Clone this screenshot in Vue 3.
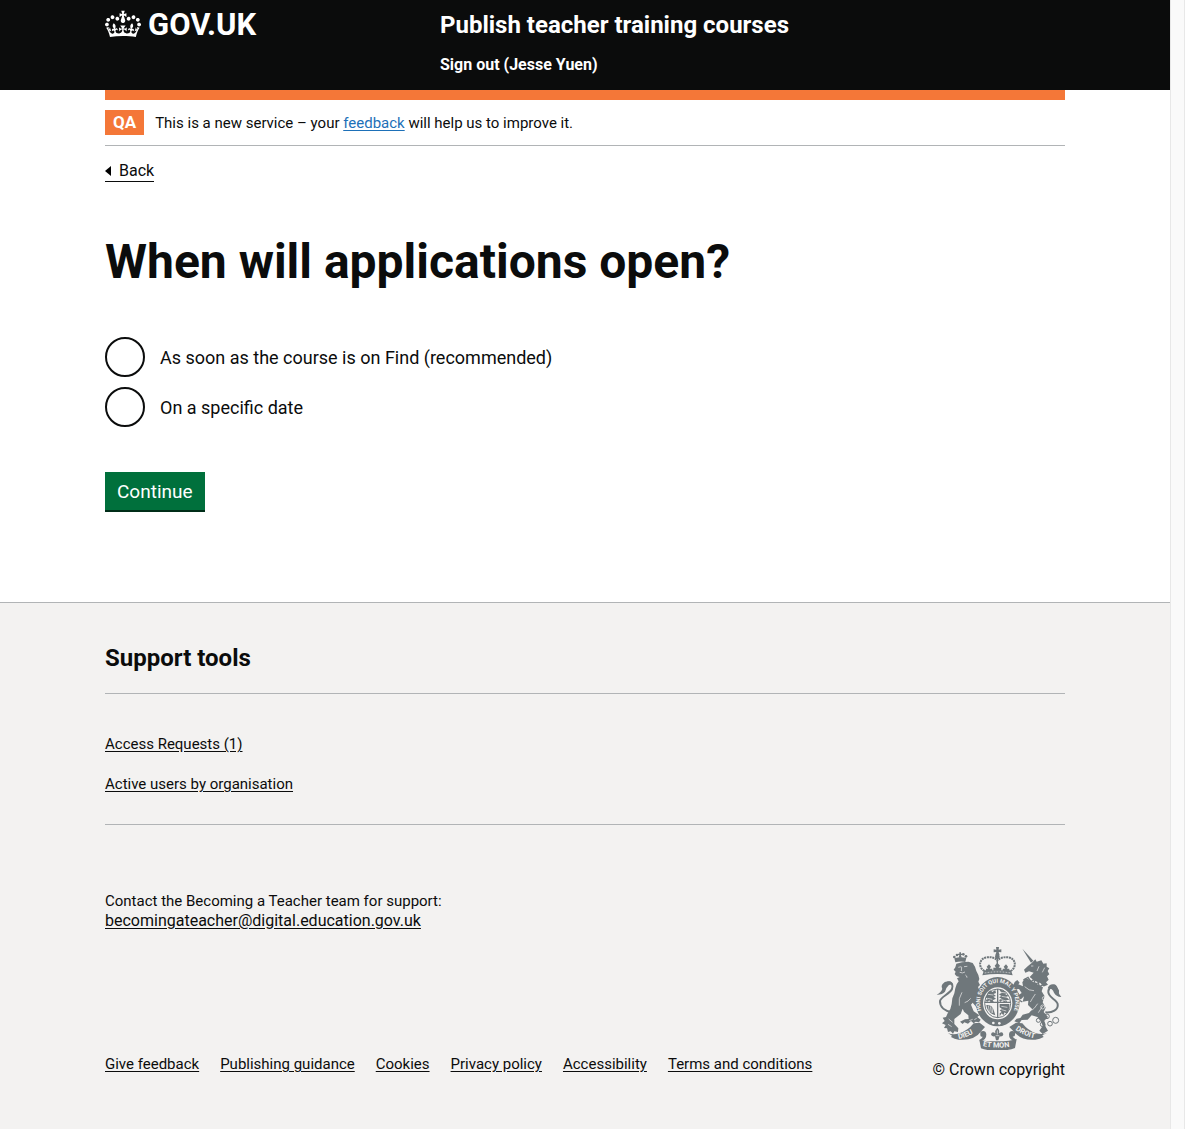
<script setup>
import { ref } from 'vue'

const opening = ref('')
const options = [
  { value: 'course-on-find', label: 'As soon as the course is on Find (recommended)' },
  { value: 'specific-date', label: 'On a specific date' },
]
const supportLinks = ['Access Requests (1)', 'Active users by organisation']
const footerLinks = [
  'Give feedback',
  'Publishing guidance',
  'Cookies',
  'Privacy policy',
  'Accessibility',
  'Terms and conditions',
]
</script>

<template>
  <div class="window">
    <div class="page">
      <header class="header">
        <div class="container header-grid">
          <a class="logo" href="#" aria-label="GOV.UK">
            <svg class="crown" viewBox="0 0 132 97" aria-hidden="true">
              <path
                fill="currentColor"
                fill-rule="evenodd"
                d="M25 30.2c3.5 1.5 7.7-.2 9.1-3.7 1.5-3.6-.2-7.8-3.9-9.2-3.6-1.4-7.6.3-9.1 3.9-1.4 3.5.3 7.5 3.9 9zM9 39.5c3.6 1.5 7.8-.2 9.2-3.7 1.5-3.6-.2-7.8-3.9-9.1-3.6-1.5-7.6.2-9.1 3.8-1.4 3.5.3 7.5 3.8 9zM4.4 57.2c3.5 1.5 7.7-.2 9.1-3.8 1.5-3.6-.2-7.7-3.9-9.1-3.5-1.5-7.6.3-9.1 3.8-1.4 3.5.3 7.6 3.9 9.1zm38.3-21.4c3.5 1.5 7.7-.2 9.1-3.8 1.5-3.6-.2-7.7-3.9-9.1-3.6-1.5-7.6.3-9.1 3.8-1.3 3.6.4 7.7 3.9 9.1zm64.4-5.6c-3.6 1.5-7.8-.2-9.1-3.7-1.5-3.6.2-7.8 3.8-9.2 3.6-1.4 7.7.3 9.2 3.9 1.3 3.5-.4 7.5-3.9 9zm15.9 9.3c-3.6 1.5-7.7-.2-9.1-3.7-1.5-3.6.2-7.8 3.7-9.1 3.6-1.5 7.7.2 9.2 3.8 1.5 3.5-.3 7.5-3.8 9zm4.7 17.7c-3.6 1.5-7.8-.2-9.2-3.8-1.5-3.6.2-7.7 3.9-9.1 3.6-1.5 7.7.3 9.2 3.8 1.3 3.5-.4 7.6-3.9 9.1zM89.3 35.8c-3.6 1.5-7.8-.2-9.2-3.8-1.4-3.6.2-7.7 3.9-9.1 3.6-1.5 7.7.3 9.2 3.8 1.4 3.6-.3 7.7-3.9 9.1zM69.7 17.7l8.9 4.7V9.3l-8.9 2.8c-.2-.3-.5-.6-.9-.9L72.4 0H59.6l3.5 11.2c-.3.3-.6.5-.9.9l-8.8-2.8v13.1l8.8-4.7c.3.3.6.7.9.9l-5 15.4v.1c-.2.8-.4 1.6-.4 2.4 0 4.1 3.1 7.5 7 8.1h.2c.3 0 .7.1 1 .1.4 0 .7 0 1-.1h.2c4-.6 7.1-4.1 7.1-8.1 0-.8-.1-1.7-.4-2.4V34l-5.1-15.4c.4-.2.7-.6 1-.9zM66 92.8c16.9 0 32.8 1.1 47.1 3.2 4-16.9 8.9-26.7 14-33.5l-9.6-3.4c1 4.9 1.1 7.2 0 10.2-1.5-1.4-3-4.3-4.2-8.7L108.6 76c2.8-2 5-3.2 7.5-3.3-4.4 9.4-10 11.9-13.6 11.2-4.3-.8-6.3-4.6-5.6-7.9 1-4.7 5.7-5.9 8-.5 4.3-8.7-3-11.4-7.6-8.8 7.1-7.2 7.9-13.5 2.1-21.1-8 6.1-8.1 12.3-4.5 20.8-4.7-5.4-12.1-2.5-9.5 6.2 3.4-5.2 7.9-2 7.2 3.1-.6 4.3-6.4 7.8-13.5 7.2-10.3-.9-10.9-8-11.2-13.8 2.5-.5 7.1 1.8 11 7.3L80.2 60c-4.1 4.4-8 5.3-12.3 5.4 1.4-4.4 8-11.6 8-11.6H55.5s6.4 7.2 7.9 11.6c-4.2-.1-8-1-12.3-5.4l1.4 16.4c3.9-5.5 8.5-7.7 10.9-7.3-.3 5.8-.9 12.8-11.1 13.8-7.2.6-12.9-2.9-13.5-7.2-.7-5 3.8-8.3 7.1-3.1 2.7-8.7-4.6-11.6-9.4-6.2 3.7-8.5 3.6-14.7-4.6-20.8-5.8 7.6-5 13.9 2.2 21.1-4.7-2.6-11.9.1-7.7 8.8 2.3-5.5 7.1-4.2 8.1.5.7 3.3-1.3 7.1-5.7 7.9-3.5.7-9-1.8-13.5-11.2 2.5.1 4.7 1.3 7.5 3.3l-4.7-15.4c-1.2 4.4-2.7 7.2-4.3 8.7-1.1-3-.9-5.3 0-10.2l-9.5 3.4c5 6.9 9.9 16.7 14 33.5 14.8-2.1 30.8-3.2 47.7-3.2z"
              />
            </svg>
            <span class="logo-text">GOV.UK</span>
          </a>
          <div>
            <a class="service-name" href="#">Publish teacher training courses</a>
            <a class="sign-out" href="#">Sign out (Jesse Yuen)</a>
          </div>
        </div>
      </header>

      <div class="container">
        <div class="environment-bar"></div>
        <div class="phase-banner">
          <strong class="tag">QA</strong>
          <span>This is a new service – your <a href="#">feedback</a> will help us to improve it.</span>
        </div>

        <a class="back-link" href="#">
          <svg class="back-arrow" viewBox="0 0 6 10" aria-hidden="true"><path d="M0 5 6 0v10z" /></svg>
          Back
        </a>

        <main>
          <form @submit.prevent>
            <fieldset>
              <legend><h1>When will applications open?</h1></legend>
              <div v-for="o in options" :key="o.value" class="radio-row">
                <input :id="o.value" v-model="opening" type="radio" name="opening" :value="o.value" />
                <label :for="o.value">{{ o.label }}</label>
              </div>
            </fieldset>
            <button class="continue" type="submit">Continue</button>
          </form>
        </main>
      </div>

      <footer class="footer">
        <div class="container">
          <h2>Support tools</h2>
          <ul class="support-links">
            <li v-for="l in supportLinks" :key="l"><a href="#">{{ l }}</a></li>
          </ul>
          <p class="contact">
            Contact the Becoming a Teacher team for support:<br />
            <a class="email" href="#">becomingateacher@digital.education.gov.uk</a>
          </p>
          <div class="meta">
            <ul class="meta-links">
              <li v-for="l in footerLinks" :key="l"><a href="#">{{ l }}</a></li>
            </ul>
            <a class="copyright" href="#">
              <svg class="arms" viewBox="47 33 384 312" aria-hidden="true">
                <defs>
                  <path id="garter" d="M197 245A53 60 0 1 1 273 245" />
                  <path id="scroll-left" d="M118 312Q147 307 178 285" />
                  <path id="scroll-mid" d="M190 333Q235 343 284 333" />
                  <path id="scroll-right" d="M288 284Q318 306 354 312" />
                </defs>

                <!-- lion -->
                <g class="ink">
                  <path d="M108 82 105 70q17-6 36-2l-3 13q-14-4-30 1z" />
                  <circle cx="105" cy="66" r="4" />
                  <circle cx="113" cy="60" r="4" />
                  <circle cx="132" cy="58" r="4" />
                  <circle cx="140" cy="64" r="4" />
                  <path d="M120 52h5v4h4v4h-4l2 8h-9l2-8h-4v-4h4z" />
                  <path d="M111 86 128 82 147 80 160 84 167 95 171 108 177 120 180 132 177 140 182 150 176 156 181 167 174 174 179 184 173 197 182 207 193 208 188 216 192 224 182 224 170 215 160 203 155 209 163 229 180 241 174 246 184 254 179 262 169 260 163 265 155 258 146 266 135 262 130 267 122 260 137 253 148 252 147 241 134 230 130 221 124 237 105 252 105 267 117 280 116 291 105 289 101 296 94 289 86 291 83 280 74 279 79 270 68 265 76 258 70 248 80 246 85 235 93 222 97 207 99 190 105 175 108 160 112 148 118 139 113 130 121 126 112 124 106 117 109 110 103 104 108 97z" />
                </g>
                <g class="paper-line">
                  <path d="M117 97l9-2m8 0 10-1M127 96l-1 12M121 112q9 4 16-1M138 120q5 2 5 8" />
                  <path d="M128 172q-12 18-8 40M154 190q-7 10-18 13" />
                  <path d="M88 252l12 10M86 268l11 7M150 257l10-4M165 254l7-4" />
                </g>
                <g class="ink-line">
                  <path d="M98 232C77 228 61 216 62 198c1-12 29-21 36-36 5-11-2-20-12-20-13 0-19 12-14 18" stroke-width="6" />
                </g>
                <path class="ink" d="M52 179q14-7 17-18 2-14 15-21 14-4 18 10-9-3-14 1-8 7-11 19-9 10-25 9z" />

                <!-- unicorn -->
                <g class="ink">
                  <path d="M309 41 342 77 335 83z" />
                  <path d="M337 84 348 73 352 80 366 76 372 86 382 85 382 95 390 100 385 108 390 118 383 124 388 134 380 142 386 149 372 155 364 145 345 137 331 126 343 113 329 109 318 113 314 104 325 94z" />
                  <path d="M326 132 371 157 367 169 376 184 370 202 379 218 373 231 386 246 375 257 379 275 386 287 370 297 360 287 370 273 364 257 354 246 337 241 325 254 307 255 300 265 285 259 292 251 303 249 310 239 329 234 339 223 326 210 327 197 310 200 314 184 305 193 293 193 296 181 307 174 299 162 288 163 280 155 286 141 294 135 301 143 297 148 311 154 309 142 317 130z" />
                </g>
                <g class="paper-line">
                  <path d="M335 93h7M359 94l-6 14M376 98l-7 14M323 125q20 18 50 30" />
                  <path d="M316 155q13 13 28 12M348 177q-11 16-15 24M355 206q-11 17-18 20M370 213l-13 20" />
                </g>
                <g class="ink-line">
                  <path d="M378 232c20 2 40-7 37-25-3-14-31-20-28-39 2-13 19-18 27-5 5 7 1 11-3 13" stroke-width="6" />
                  <path d="M312 135l14-8 9 13 8-7 5 14 9-4 3 12 12-6M285 166l12 10-2 17 14 8" stroke-width="4" />
                  <circle cx="383" cy="244" r="7" />
                  <circle cx="357" cy="256" r="6" />
                  <circle cx="370" cy="268" r="7" />
                  <circle cx="392" cy="266" r="7" />
                  <circle cx="409" cy="256" r="9" />
                </g>
                <g class="paper-line">
                  <circle cx="374" cy="190" r="5" />
                  <circle cx="370" cy="216" r="6" />
                </g>
                <path class="ink" d="M385 160q5-15 20-12 10 3 12 20 1 10 9 18-16-1-22-13-4-13-19-13z" />

                <!-- royal crown -->
                <g class="ink">
                  <path d="M230 36h9l-1 8 8-1v9l-8-1 3 10h-13l3-10-8 1v-9l8 1z" />
                  <circle cx="234" cy="65" r="7" />
                  <path d="M194 106h81l5 15q-45-8-91 0z" />
                  <path d="M234 83l8 9-4 6h8v9h-24v-9h8l-4-6zM209 88l6 7-4 6h8v8h-19v-8h6l-4-6zM260 88l6 7-3 6h7v8h-20v-8h7l-4-6z" />
                </g>
                <g class="ink-line">
                  <path d="M195 108C174 94 181 70 202 67c18-2 27 3 32 10 6-7 16-12 33-10 21 3 27 27 8 41" stroke-width="6" stroke-dasharray="6 2" />
                  <path d="M234 70v18" stroke-width="4" />
                </g>
                <path class="paper-line" d="M196 114q39-7 78 0" stroke-dasharray="5 4" />

                <!-- garter and shield -->
                <ellipse class="ink" cx="235" cy="200" rx="66" ry="74" />
                <ellipse class="paper" cx="235" cy="205" rx="44" ry="48" />
                <ellipse class="ink-line" cx="235" cy="205" rx="39" ry="43" />
                <text class="motto" font-size="17" text-anchor="middle">
                  <textPath href="#garter" startOffset="50%">HONI SOIT QUI MAL Y PENSE</textPath>
                </text>
                <g class="ink">
                  <path d="M201 182q4-12 12-16l6 5 9-6 2 9-8 3 8 6-8 2 8 6-10 5 4 6h-10l-4-6-7 5-4-6 7-3-8-5z" />
                  <path d="M240 164q14 0 23 9l-5 5 10 4-7 4 9 8-10 2 4 6h-10l-5-6-6 5-4-6 8-4-8-4 7-4-7-5 8-4z" />
                  <path d="M241 207h29q1 20-9 30l-5-5-4 9-5-6-6 9v-9l6-4-6-5 7-4-7-5z" />
                  <path d="M201 210q18-3 23 18l4 13-8-3q-17-9-19-28z" />
                </g>
                <g class="ink-line">
                  <path d="M235 162v87M196 202h79" stroke-width="4" />
                </g>
                <g class="paper-line">
                  <path d="M207 212l3 18m3-16 3 19m2-16 2 17" />
                  <path d="M245 172l17 2M247 184l17 3M246 194l14 4M206 178l16 2M205 190l14 3M246 214l18 3M247 224l14 4" />
                </g>
                <g class="paper"><circle cx="222" cy="264" r="4" /><circle cx="240" cy="265" r="4" /></g>

                <!-- scroll and motto -->
                <g class="ink">
                  <path d="M86 294q15 7 34 1 26-8 43-30l18-2 16 13-10 11q-22 31-69 27-13-1-23-8l3-4z" />
                  <path d="M383 294q-15 6-33 1-24-8-41-30l-19-2-20 13 11 11q24 31 67 27 14-1 25-8l-4-5z" />
                  <path d="M180 314q15 5 54 5t58-7l-5 27q-20 8-51 8-34 0-51-7z" />
                  <path d="M183 290q16-6 18 8 1 16-19 23l-1-7q8-4 9-9-7 2-7-5zM287 290q-16-6-18 8-1 16 18 22l2-7q-8-4-9-9 7 2 7-5z" />
                  <path d="M234 278q8 8 5 17 11-7 13 3 0 8-11 6l-4 12h-7l-3-12q-11 2-12-6 3-10 13-3-2-9 6-17z" />
                </g>
                <path class="paper-line" d="M229 302h11M234 286v12" />
                <g class="motto" font-size="22">
                  <text><textPath href="#scroll-left">DIEU</textPath></text>
                  <text><textPath href="#scroll-mid">ET MON</textPath></text>
                  <text><textPath href="#scroll-right">DROIT</textPath></text>
                </g>
              </svg>
              © Crown copyright
            </a>
          </div>
        </div>
      </footer>
    </div>
    <div class="scroll-gutter"></div>
  </div>
</template>

<style>
body {
  margin: 0;
}
</style>

<style scoped>
.window {
  display: flex;
  min-height: 100vh;
  font-family: Roboto, "Liberation Sans", sans-serif;
  font-size: 16px;
  line-height: 20px;
  color: #0b0c0c;
  background: #fff;
}
.page {
  flex: 1;
  display: flex;
  flex-direction: column;
}
.scroll-gutter {
  box-sizing: border-box;
  width: 15px;
  background: #fafafa;
  border: solid #e8e8e8;
  border-width: 0 1px;
}
.container {
  box-sizing: border-box;
  width: calc(100% - 60px);
  max-width: 960px;
  margin: 0 auto;
}
a {
  color: inherit;
  text-underline-offset: 2px;
}
ul {
  list-style: none;
  margin: 0;
  padding: 0;
}

.header {
  background: #0b0c0c;
  color: #fff;
  padding: 10px 0 13px;
}
.header-grid {
  display: grid;
  grid-template-columns: 335px 1fr;
}
.header a {
  text-decoration: none;
  font-weight: 700;
}
.logo {
  display: flex;
  align-items: flex-start;
  gap: 7px;
}
.crown {
  width: 36px;
  height: 28px;
}
.logo-text {
  font-size: 31px;
  line-height: 30px;
}
.service-name,
.sign-out {
  display: block;
  width: fit-content;
}
.service-name {
  font-size: 24px;
  line-height: 30px;
  margin-bottom: 13px;
}
.sign-out {
  line-height: 24px;
}

.environment-bar {
  height: 10px;
  background: #f47738;
}
.phase-banner {
  display: flex;
  align-items: center;
  gap: 11px;
  padding: 10px 0;
  border-bottom: 1px solid #b1b4b6;
  font-size: 15px;
}
.phase-banner a {
  color: #1d70b8;
}
.tag {
  padding: 0 8px;
  background: #f47738;
  color: #fff;
  font-size: 17px;
  line-height: 25px;
}
.back-link {
  display: flex;
  align-items: center;
  gap: 8px;
  width: fit-content;
  margin-top: 15px;
  border-bottom: 1px solid #0b0c0c;
  text-decoration: none;
}
.back-arrow {
  width: 6px;
  height: 10px;
}

main {
  padding: 55px 0 92px;
}
fieldset {
  border: 0;
  margin: 0 0 45px;
  padding: 0;
  display: flex;
  flex-direction: column;
  gap: 10px;
}
legend {
  padding: 0;
  margin-bottom: 50px;
}
h1 {
  margin: 0;
  font-size: 48px;
  line-height: 50px;
}
.radio-row {
  display: flex;
  align-items: center;
  gap: 15px;
  font-size: 18px;
}
.radio-row label {
  padding-top: 2px;
}
.radio-row input {
  appearance: none;
  box-sizing: border-box;
  width: 40px;
  height: 40px;
  margin: 0;
  border: 2px solid #0b0c0c;
  border-radius: 50%;
  background: #fff;
}
.radio-row input:checked {
  background: radial-gradient(circle, #0b0c0c 10px, #fff 11px);
}
.continue {
  display: block;
  height: 38px;
  padding: 0 12px;
  border: 0;
  background: #00703c;
  box-shadow: 0 2px 0 #002d18;
  color: #fff;
  font-family: inherit;
  font-size: 19px;
}

.footer {
  flex: 1;
  background: #f3f2f1;
  border-top: 1px solid #b1b4b6;
  padding: 40px 0;
}
h2 {
  margin: 0;
  padding-bottom: 20px;
  border-bottom: 1px solid #b1b4b6;
  font-size: 24px;
  line-height: 30px;
}
.support-links {
  display: flex;
  flex-direction: column;
  gap: 20px;
  padding: 40px 0 30px;
  border-bottom: 1px solid #b1b4b6;
  font-size: 15px;
}
.contact {
  margin: 66px 0 15px;
  font-size: 15px;
}
.email {
  font-size: 16px;
}
.meta {
  display: flex;
  justify-content: space-between;
  align-items: flex-end;
}
.meta-links {
  display: flex;
  flex-wrap: wrap;
  gap: 5px 21px;
  font-size: 15px;
  padding-bottom: 6px;
}
.copyright {
  display: flex;
  flex-direction: column;
  align-items: center;
  gap: 10px;
  text-decoration: none;
}
.arms {
  width: 128px;
  height: 104px;
}
.ink {
  fill: #6f777b;
}
.ink-line {
  fill: none;
  stroke: #6f777b;
  stroke-width: 3px;
}
.paper {
  fill: #f3f2f1;
}
.paper-line {
  fill: none;
  stroke: #f3f2f1;
  stroke-width: 2px;
}
.motto {
  fill: #f3f2f1;
  font-weight: 700;
}
</style>
